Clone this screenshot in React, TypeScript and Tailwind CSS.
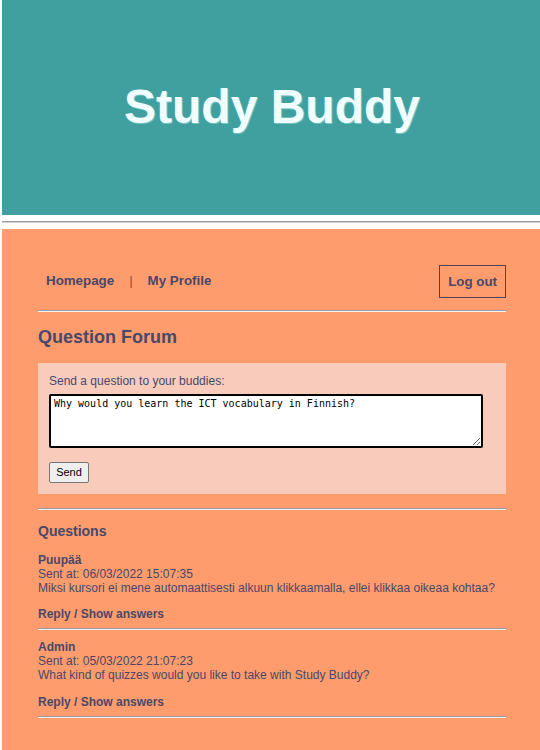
import React from "react";

const txt = "text-[#48486a]";

function Hr() {
  return <div className="h-0 border-t border-t-[#9a9aa8] border-b border-b-[#f4f4f4]" />;
}

function Question({ name, sent, text, first }: { name: string; sent: string; text: string; first?: boolean }) {
  return (
    <div>
      <div className={first ? "mt-[14px]" : "mt-[10px]"}>
        <div className="text-[12px] leading-[14px] font-bold">{name}</div>
        <div className="text-[12px] leading-[14px]">Sent at: {sent}</div>
        <div className="text-[12px] leading-[14px]">{text}</div>
      </div>
      <div className={`text-[12px] leading-[14px] font-bold ${first ? "mt-[12px]" : "mt-[13px]"}`}>Reply / Show answers</div>
      <div className="mt-[7px]">
        <Hr />
      </div>
    </div>
  );
}

export default function App() {
  return (
    <div className="pl-[2px] bg-white min-h-[750px] flex flex-col" style={{ fontFamily: '"Liberation Sans", Arial, sans-serif' }}>
      <header className="h-[215px] bg-[#40a0a0] flex items-center justify-center">
        <h1 className="text-[48px] font-bold text-[#f0ffff] leading-none mt-[-2px] ml-[2px] [text-shadow:1px_1px_0_rgba(190,240,235,0.45)]">Study Buddy</h1>
      </header>
      <div className="mt-[6px] h-0 border-t border-t-[#9a9a9a] border-b border-b-[#d0d0d0]" />
      <main className={`mt-[6px] flex-1 bg-[#ff9c6d] pl-[36px] pr-[34px] pt-[36px] pb-[30px] ${txt}`}>
        <nav className="flex items-center justify-between h-[33px]">
          <div className="flex items-center text-[13.33px] font-bold pl-[8px] mt-[-2px]">
            <span>Homepage</span>
            <span className="mx-[15px] font-normal text-[#8a4f4a]">|</span>
            <span>My Profile</span>
          </div>
          <div className="h-[33px] px-[8px] border border-[#55405a] flex items-center text-[13.33px] font-bold">Log out</div>
        </nav>
        <div className="mt-[12px]">
          <Hr />
        </div>
        <h2 className="mt-[15px] text-[18px] leading-[21px] font-bold">Question Forum</h2>
        <section className="mt-[15px] bg-[#f9cbbb] pl-[11px] pr-[23px] pt-[11px] pb-[11px]">
          <div className="text-[12px] leading-[14px]">Send a question to your buddies:</div>
          <textarea
            className="mt-[6px] block w-full h-[54px] bg-white border-2 border-black rounded-[2px] px-[3px] py-[2px] text-[10px] leading-[12px] text-black outline-none"
            style={{ fontFamily: '"DejaVu Sans Mono", monospace' }}
            defaultValue="Why would you learn the ICT vocabulary in Finnish?"
          />
          <button className="mt-[14px] block w-[40px] h-[21px] bg-[#efefef] border border-[#767676] rounded-[2px] text-[11px] text-black">
            Send
          </button>
        </section>
        <div className="mt-[14px]">
          <Hr />
        </div>
        <h3 className="mt-[13px] text-[14px] leading-[16px] font-bold">Questions</h3>
        <Question
          first
          name="Puupää"
          sent="06/03/2022 15:07:35"
          text="Miksi kursori ei mene automaattisesti alkuun klikkaamalla, ellei klikkaa oikeaa kohtaa?"
        />
        <Question
          name="Admin"
          sent="05/03/2022 21:07:23"
          text="What kind of quizzes would you like to take with Study Buddy?"
        />
      </main>
    </div>
  );
}
